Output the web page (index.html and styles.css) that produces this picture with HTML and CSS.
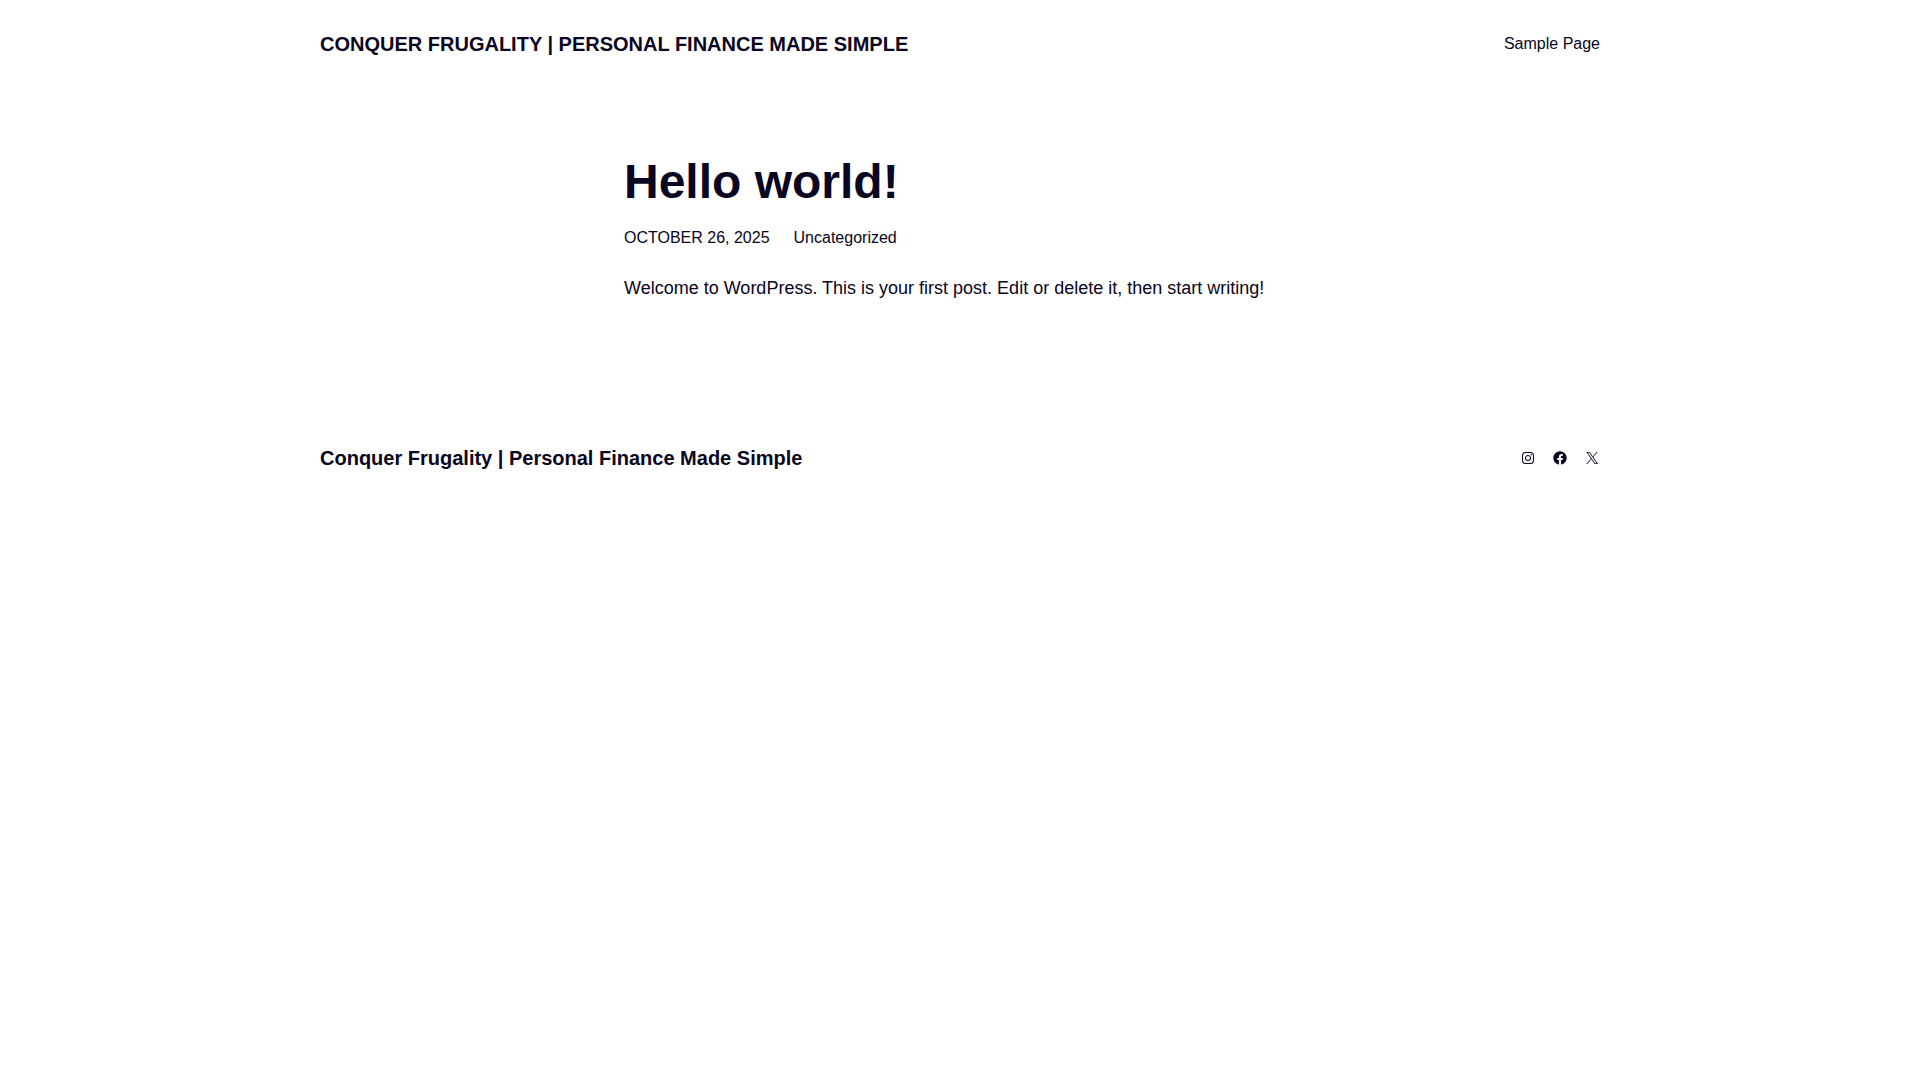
FILE: index.html
```html
<!DOCTYPE html>
<html lang="en">

<head>
  <meta charset="UTF-8">
  <meta name="viewport" content="width=device-width, initial-scale=1.0">
  <title>Hello world!</title>
  <link rel="stylesheet" href="styles.css">
</head>

<body>
  <header class="site-header">
    <div class="wide">
      <p class="site-title uppercase"><a href="#">Conquer Frugality | Personal Finance Made Simple</a></p>
      <nav class="navigation">
        <a href="#">Sample Page</a>
      </nav>
    </div>
  </header>

  <main class="content">
    <h1 class="post-title">Hello world!</h1>
    <div class="post-meta">
      <time class="uppercase" datetime="2025-10-26">October 26, 2025</time>
      <a href="#">Uncategorized</a>
    </div>
    <p class="post-text">Welcome to WordPress. This is your first post. Edit or delete it, then start writing!</p>
  </main>

  <footer class="site-footer">
    <div class="wide">
      <p class="site-title"><a href="#">Conquer Frugality | Personal Finance Made Simple</a></p>
      <ul class="social-links">
        <li>
          <a href="#" aria-label="Instagram">
            <svg class="icon" viewBox="0 0 24 24" aria-hidden="true">
              <path d="M12,4.622c2.403,0,2.688,0.009,3.637,0.052c0.877,0.04,1.354,0.187,1.671,0.31c0.42,0.163,0.72,0.358,1.035,0.673c0.315,0.315,0.51,0.615,0.673,1.035c0.123,0.317,0.27,0.794,0.31,1.671c0.043,0.949,0.052,1.234,0.052,3.637s-0.009,2.688-0.052,3.637c-0.04,0.877-0.187,1.354-0.31,1.671c-0.163,0.42-0.358,0.72-0.673,1.035c-0.315,0.315-0.615,0.51-1.035,0.673c-0.317,0.123-0.794,0.27-1.671,0.31c-0.949,0.043-1.233,0.052-3.637,0.052s-2.688-0.009-3.637-0.052c-0.877-0.04-1.354-0.187-1.671-0.31c-0.42-0.163-0.72-0.358-1.035-0.673c-0.315-0.315-0.51-0.615-0.673-1.035c-0.123-0.317-0.27-0.794-0.31-1.671C4.631,14.688,4.622,14.403,4.622,12s0.009-2.688,0.052-3.637c0.04-0.877,0.187-1.354,0.31-1.671c0.163-0.42,0.358-0.72,0.673-1.035c0.315-0.315,0.615-0.51,1.035-0.673c0.317-0.123,0.794-0.27,1.671-0.31C9.312,4.631,9.597,4.622,12,4.622 M12,3C9.556,3,9.249,3.01,8.289,3.054C7.331,3.098,6.677,3.25,6.105,3.472C5.513,3.702,5.011,4.01,4.511,4.511c-0.5,0.5-0.808,1.002-1.038,1.594C3.25,6.677,3.098,7.331,3.054,8.289C3.01,9.249,3,9.556,3,12c0,2.444,0.01,2.751,0.054,3.711c0.044,0.958,0.196,1.612,0.418,2.185c0.23,0.592,0.538,1.094,1.038,1.594c0.5,0.5,1.002,0.808,1.594,1.038c0.572,0.222,1.227,0.375,2.185,0.418C9.249,20.99,9.556,21,12,21s2.751-0.01,3.711-0.054c0.958-0.044,1.612-0.196,2.185-0.418c0.592-0.23,1.094-0.538,1.594-1.038c0.5-0.5,0.808-1.002,1.038-1.594c0.222-0.572,0.375-1.227,0.418-2.185C20.99,14.751,21,14.444,21,12s-0.01-2.751-0.054-3.711c-0.044-0.958-0.196-1.612-0.418-2.185c-0.23-0.592-0.538-1.094-1.038-1.594c-0.5-0.5-1.002-0.808-1.594-1.038c-0.572-0.222-1.227-0.375-2.185-0.418C14.751,3.01,14.444,3,12,3L12,3z M12,7.378c-2.552,0-4.622,2.069-4.622,4.622S9.448,16.622,12,16.622s4.622-2.069,4.622-4.622S14.552,7.378,12,7.378z M12,15c-1.657,0-3-1.343-3-3s1.343-3,3-3s3,1.343,3,3S13.657,15,12,15z M16.804,6.116c-0.596,0-1.08,0.484-1.08,1.08s0.484,1.08,1.08,1.08c0.596,0,1.08-0.484,1.08-1.08S17.401,6.116,16.804,6.116z" />
            </svg>
          </a>
        </li>
        <li>
          <a href="#" aria-label="Facebook">
            <svg class="icon" viewBox="0 0 24 24" aria-hidden="true">
              <path d="M12 2C6.5 2 2 6.5 2 12c0 5 3.7 9.1 8.4 9.9v-7H7.9V12h2.5V9.8c0-2.5 1.5-3.9 3.8-3.9 1.1 0 2.2.2 2.2.2v2.5h-1.3c-1.2 0-1.6.8-1.6 1.6V12h2.8l-.4 2.9h-2.3v7C18.3 21.1 22 17 22 12c0-5.5-4.5-10-10-10z" />
            </svg>
          </a>
        </li>
        <li>
          <a href="#" aria-label="X">
            <svg class="icon" viewBox="0 0 24 24" aria-hidden="true">
              <path d="M13.982 10.622 20.54 3h-1.554l-5.693 6.618L8.745 3H3.5l6.876 10.007L3.5 21h1.554l6.012-6.989L15.868 21h5.245l-7.131-10.378Zm-2.128 2.474-.697-.997-5.543-7.93H8l4.474 6.4.697.996 5.815 8.318h-2.387l-4.745-6.787Z" />
            </svg>
          </a>
        </li>
      </ul>
    </div>
  </footer>
</body>

</html>
```
FILE: styles.css
```css
body {
  font-family: "Liberation Sans", Arial, sans-serif;
  font-size: 18px;
  line-height: 28px;
  background-color: #fff;
  color: #0a0520;
  margin: 0;
}

a {
  color: inherit;
  text-decoration: none;
}

a:hover {
  text-decoration: underline;
}

.site-header,
.site-footer {
  padding: 30px;
}

.wide {
  display: flex;
  flex-wrap: wrap;
  align-items: center;
  justify-content: space-between;
  gap: 16px;
  max-width: 1280px;
  margin: 0 auto;
}

.site-title {
  font-size: 20px;
  font-weight: 700;
  margin: 0;
}

.uppercase {
  text-transform: uppercase;
}

.navigation {
  font-size: 16px;
}

.content {
  max-width: 672px;
  margin: 0 auto;
  padding: 64px 30px 112px;
}

.post-title {
  font-size: 48px;
  line-height: 60px;
  margin: 0;
}

.post-meta {
  display: flex;
  flex-wrap: wrap;
  gap: 24px;
  font-size: 16px;
  margin: 12px 0 22px;
}

.post-text {
  margin: 0;
}

.social-links {
  display: flex;
  gap: 16px;
  list-style: none;
  margin: 0;
  padding: 0;
}

.social-links a {
  display: block;
}

.icon {
  display: block;
  width: 16px;
  height: 16px;
  fill: currentColor;
}
```
